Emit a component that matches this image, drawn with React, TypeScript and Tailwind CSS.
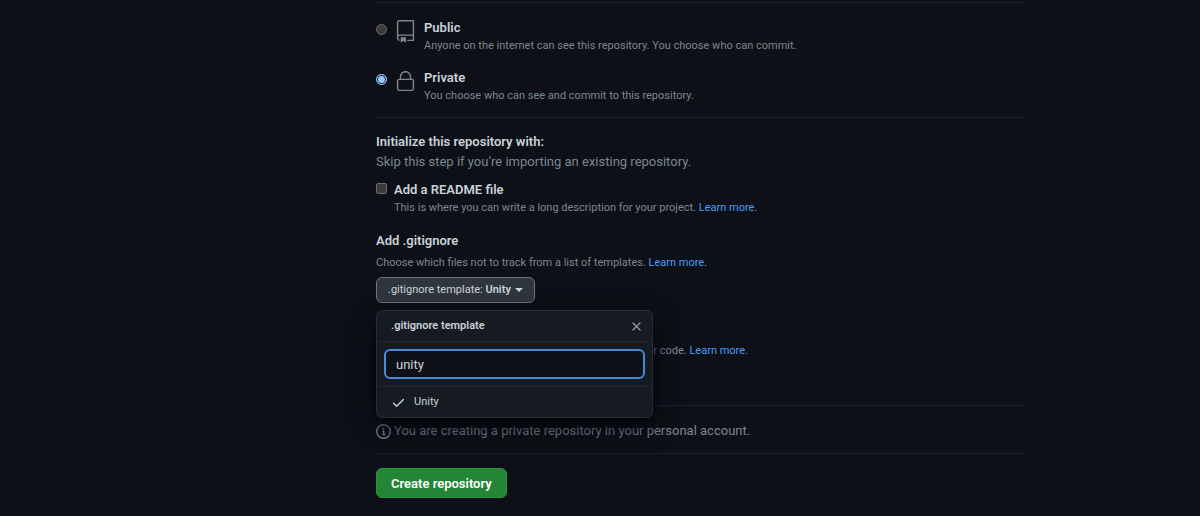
import { ReactNode } from "react";

const RepoIcon = () => (
  <svg width="23" height="23" viewBox="0 0 24 24" fill="currentColor" className="shrink-0">
    <path fillRule="evenodd" d="M3 2.75A2.75 2.75 0 015.75 0h14.5a.75.75 0 01.75.75v20.5a.75.75 0 01-.75.75h-6a.75.75 0 010-1.5h5.25v-4H6A1.5 1.5 0 004.5 18v.75c0 .716.43 1.334 1.05 1.605a.75.75 0 01-.6 1.374A3.25 3.25 0 013 18.75v-16zM19.5 1.5V15H6c-.546 0-1.059.146-1.5.401V2.75c0-.69.56-1.25 1.25-1.25H19.5z" />
    <path d="M7 18.25a.25.25 0 01.25-.25h5a.25.25 0 01.25.25v5.01a.25.25 0 01-.397.201l-2.206-1.604a.25.25 0 00-.294 0L7.397 23.46a.25.25 0 01-.397-.2v-5.01z" />
  </svg>
);

const LockIcon = () => (
  <svg width="23" height="23" viewBox="0 0 24 24" fill="currentColor" className="shrink-0">
    <path fillRule="evenodd" d="M6 9V7.25C6 3.845 8.503 1 12 1s6 2.845 6 6.25V9h.5a2.5 2.5 0 012.5 2.5v8a2.5 2.5 0 01-2.5 2.5h-13A2.5 2.5 0 013 19.5v-8A2.5 2.5 0 015.5 9H6zm1.5-1.75C7.5 4.58 9.422 2.5 12 2.5c2.578 0 4.5 2.08 4.5 4.75V9h-9V7.25zm-3 4.25a1 1 0 011-1h13a1 1 0 011 1v8a1 1 0 01-1 1h-13a1 1 0 01-1-1v-8z" />
  </svg>
);

const InfoIcon = () => (
  <svg width="15" height="15" viewBox="0 0 16 16" fill="currentColor" className="shrink-0">
    <path fillRule="evenodd" d="M8 1.5a6.5 6.5 0 100 13 6.5 6.5 0 000-13zM0 8a8 8 0 1116 0A8 8 0 010 8zm6.5-.25A.75.75 0 017.25 7h1a.75.75 0 01.75.75v2.75h.25a.75.75 0 010 1.5h-2a.75.75 0 010-1.5h.25v-2h-.25a.75.75 0 01-.75-.75zM8 6a1 1 0 100-2 1 1 0 000 2z" />
  </svg>
);

const CloseIcon = () => (
  <svg width="15" height="15" viewBox="0 0 16 16" fill="currentColor">
    <path fillRule="evenodd" d="M3.72 3.72a.75.75 0 011.06 0L8 6.94l3.22-3.22a.75.75 0 111.06 1.06L9.06 8l3.22 3.22a.75.75 0 11-1.06 1.06L8 9.06l-3.22 3.22a.75.75 0 01-1.06-1.06L6.94 8 3.72 4.78a.75.75 0 010-1.06z" />
  </svg>
);

const CheckIcon = () => (
  <svg width="15" height="15" viewBox="0 0 16 16" fill="currentColor" className="shrink-0">
    <path fillRule="evenodd" d="M13.78 4.22a.75.75 0 010 1.06l-7.25 7.25a.75.75 0 01-1.06 0L2.22 9.28a.75.75 0 011.06-1.06L6 10.94l6.72-6.72a.75.75 0 011.06 0z" />
  </svg>
);

const Caret = () => <span className="border-x-4 border-t-4 border-x-transparent border-t-current" />;

const LearnMore = () => (
  <a href="#" className="text-[#4c9bf5] hover:underline">
    Learn more.
  </a>
);

const Hint = ({ children }: { children: ReactNode }) => (
  <p className="text-[11px] leading-4 text-[#7d8590]">{children}</p>
);

const visibilities = [
  {
    value: "public",
    label: "Public",
    icon: <RepoIcon />,
    desc: "Anyone on the internet can see this repository. You choose who can commit.",
  },
  {
    value: "private",
    label: "Private",
    icon: <LockIcon />,
    desc: "You choose who can see and commit to this repository.",
  },
];

export default function App() {
  return (
    <div className="min-h-screen bg-[#0d1117] pl-94 pt-[2px] font-[Roboto,'Noto_Sans',sans-serif] text-[13px] leading-5 text-[#c9d1d9]">
      <form className="w-full max-w-[649px]">
        {/* Visibility */}
        <fieldset className="flex flex-col gap-[14px] border-y border-[#1c2128] pt-[15px] pb-[13px]">
          {visibilities.map((v) => (
            <div key={v.value} className="flex">
              <input
                type="radio"
                id={v.value}
                name="visibility"
                defaultChecked={v.value === "private"}
                className="mt-[6px] mr-[7px] size-[11px] shrink-0 appearance-none rounded-full border border-[#6b6b6b] bg-[#3b3b3b] checked:border-[#99c8ff] checked:bg-[#99c8ff] checked:shadow-[inset_0_0_0_1px_#0d1117]"
              />
              <label htmlFor={v.value} className="flex gap-[7px]">
                <span className="mt-[2px] text-[#7d8590]">{v.icon}</span>
                <span>
                  <span className="block font-semibold">{v.label}</span>
                  <span className="block text-[11px] leading-4 text-[#7d8590]">{v.desc}</span>
                </span>
              </label>
            </div>
          ))}
        </fieldset>

        {/* Initialize */}
        <section className="border-b border-[#1c2128] pt-[14px]">
          <h2 className="font-semibold">Initialize this repository with:</h2>
          <p className="text-[#7d8590]">Skip this step if you’re importing an existing repository.</p>

          <div className="mt-2 flex">
            <input
              type="checkbox"
              id="readme"
              className="mt-[3px] mr-[7px] size-[11px] shrink-0 appearance-none rounded-[2px] border border-[#6b6b6b] bg-[#3b3b3b]"
            />
            <div>
              <label htmlFor="readme" className="block font-semibold">
                Add a README file
              </label>
              <Hint>
                This is where you can write a long description for your project. <LearnMore />
              </Hint>
            </div>
          </div>

          <h3 className="mt-[15px] mb-1 font-semibold">Add .gitignore</h3>
          <Hint>
            Choose which files not to track from a list of templates. <LearnMore />
          </Hint>
          <div className="relative mt-[6px]">
            <button
              type="button"
              className="flex h-[26px] items-center gap-1 rounded-md border border-[#6e7681] bg-[#30363d] px-[11px] text-[11px]"
            >
              <span>
                .gitignore template: <b className="font-semibold">Unity</b>
              </span>
              <Caret />
            </button>

            {/* Template picker */}
            <div className="absolute top-full left-0 mt-[7px] w-[277px] rounded-md border border-[#272c33] bg-[#161b22] text-[11px] shadow-[0_8px_24px_#010409]">
              <header className="flex h-[31px] items-center justify-between border-b border-[#21262d] pr-2 pl-[14px]">
                <span className="font-semibold">.gitignore template</span>
                <button type="button" aria-label="Close" className="text-[#8b949e]">
                  <CloseIcon />
                </button>
              </header>
              <div className="border-b border-[#21262d] p-[7px]">
                <input
                  type="text"
                  aria-label="Filter templates"
                  defaultValue="unity"
                  className="block h-[30px] w-full rounded-md border-2 border-[#4a8bd8] bg-[#0d1117] px-[10px] text-[13px] outline-none"
                />
              </div>
              <button type="button" className="flex h-[30px] w-full items-center gap-2 px-[14px]">
                <CheckIcon />
                Unity
              </button>
            </div>
          </div>

          <div className="pt-10 pb-[46px]">
            <Hint>
              A license tells others what they can and can't do with your code. <LearnMore />
            </Hint>
          </div>
        </section>

        <p className="flex items-center gap-[3px] border-b border-[#1c2128] pt-[15px] pb-3 text-[#7d8590]">
          <InfoIcon />
          You are creating a private repository in your personal account.
        </p>

        <button
          type="submit"
          className="mt-[14px] h-[30px] rounded-md border border-[#2f8f42] bg-[#238636] px-[14px] pt-px font-semibold text-white"
        >
          Create repository
        </button>
      </form>
    </div>
  );
}
